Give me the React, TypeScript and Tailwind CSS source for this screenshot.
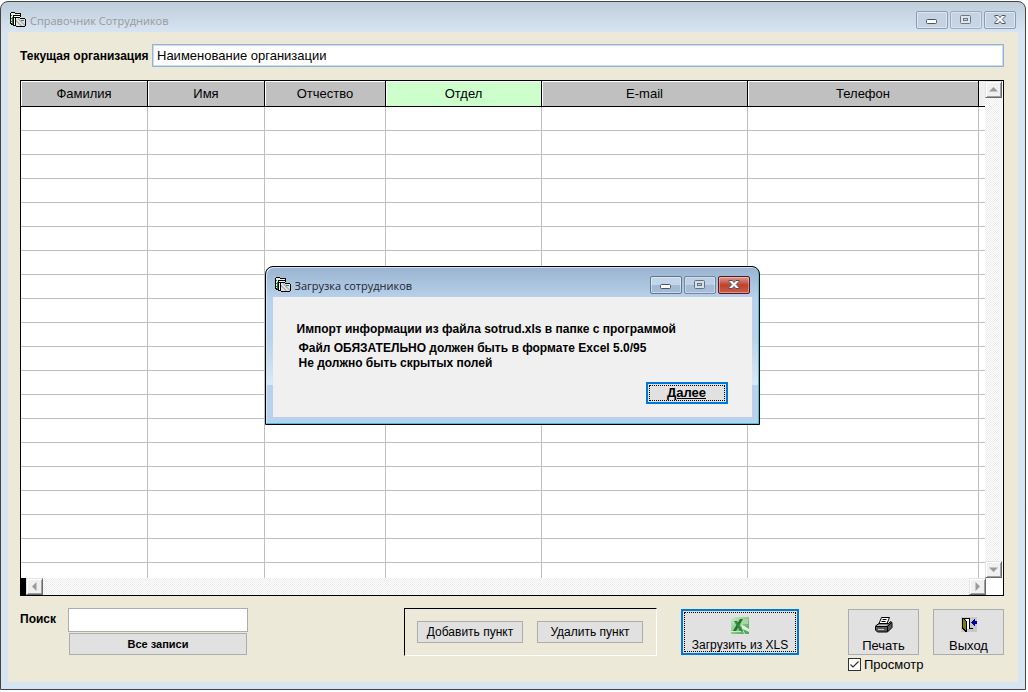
import clsx from "clsx";
import type { ReactNode } from "react";

const columns = [
  { title: "Фамилия", width: "w-[127px]" },
  { title: "Имя", width: "w-[117px]" },
  { title: "Отчество", width: "w-[121px]" },
  { title: "Отдел", width: "w-[156px]", sorted: true },
  { title: "E-mail", width: "w-[206px]" },
  { title: "Телефон", width: "w-[231px]" },
];

const rows = Array.from({ length: 20 }, (_, i) => i);

function AppIcon() {
  return (
    <svg width="16" height="16" viewBox="0 0 16 16" shapeRendering="crispEdges" aria-hidden="true">
      <path d="M1 0h4v1h6v3H4v9H1V12H0V1h1z" fill="#000" />
      <path d="M1 1h4v1h5v1H3v8H1z" fill="#e8f0e8" />
      <path d="M1 3h1v1H1zM1 6h1v1H1zM1 9h1v1H1z" fill="#0a8a2a" />
      <path d="M3 3h8v2H5v9H3z" fill="#000" />
      <path d="M4 4h6v1H4zM4 6h1v7H4z" fill="#fff" />
      <path d="M2 5h1v7H2z" fill="#0a8a2a" />
      <path d="M5 5h5v1h5v1h1v7h-1v1H6v-1H5z" fill="#000" />
      <path d="M6 6h4v1h5v7H6z" fill="#e4e4e4" />
      <path
        d="M6 8h1v1h1v1h1v1h1v1h1v1h1v1h-2v-1H9v-1H8v-1H7v-1H6zM8 6h1v1h1v1h1v1h1v1h1v1h1v1h1v2h-1v-1h-1v-1h-1v-1h-1v-1h-1V9H9V8H8z"
        fill="#b4b4b4"
      />
      <path d="M11 8h3v1h-3z" fill="#00a030" />
    </svg>
  );
}

function MinimizeGlyph() {
  return (
    <svg width="12" height="6" viewBox="0 0 12 6" aria-hidden="true">
      <rect x="0.5" y="0.5" width="10" height="4" rx="1" fill="#fff" stroke="#4c5566" />
    </svg>
  );
}

function MaximizeGlyph() {
  return (
    <svg width="12" height="10" viewBox="0 0 12 10" aria-hidden="true">
      <rect x="0.5" y="0.5" width="10" height="8" rx="1" fill="#e6e8ea" stroke="#4c5566" />
      <rect x="3.5" y="3.5" width="4" height="2" fill="#c4d2e2" stroke="#4c5566" />
    </svg>
  );
}

function CloseGlyph() {
  return (
    <svg width="12" height="10" viewBox="0 0 12 10" aria-hidden="true">
      <path
        d="M.8.5h3.4L6 2.6 7.8.5h3.4v.8L8.2 4.5l3 3.2v.8H7.8L6 6.4 4.2 8.5H.8v-.8l3-3.2-3-3.2z"
        fill="#fff"
        stroke="#4c5566"
      />
    </svg>
  );
}

function TitleBar({ title, active }: { title: string; active?: boolean }) {
  const button = clsx(
    "flex h-[18px] w-8 items-center justify-center rounded-xs border shadow-[inset_0_0_0_1px_rgba(255,255,255,0.45)]",
    active
      ? "border-[#61748c] bg-linear-to-b from-[#c3d5e9] from-50% to-[#a3bad4] to-50%"
      : "border-[#8c9db3] bg-[#c4d2e2]"
  );

  return (
    <header className="flex h-[30px] shrink-0 items-center gap-1 pt-1.5 pr-[9px] pl-[9px]">
      <AppIcon />
      <h1
        className={clsx(
          "flex-1 pt-px font-['Open_Sans',sans-serif] text-[11px] leading-4",
          active ? "text-[#1c2530]" : "text-[#999]"
        )}
      >
        {title}
      </h1>
      <div className="flex gap-0.5">
        <button type="button" aria-label="Свернуть" className={clsx(button, "pt-1")}>
          <MinimizeGlyph />
        </button>
        <button type="button" aria-label="Развернуть" className={clsx(button, "opacity-75")}>
          <MaximizeGlyph />
        </button>
        {active ? (
          <button
            type="button"
            aria-label="Закрыть"
            className="flex h-[18px] w-8 items-center justify-center rounded-xs border border-[#4f1a22] bg-linear-to-b from-[#dc9a8e] via-[#c0402c] via-50% to-[#cc5c48] shadow-[inset_0_0_0_1px_rgba(255,255,255,0.35)]"
          >
            <CloseGlyph />
          </button>
        ) : (
          <button type="button" aria-label="Закрыть" className={button}>
            <CloseGlyph />
          </button>
        )}
      </div>
    </header>
  );
}

function ScrollButton({ label, path }: { label: string; path: string }) {
  return (
    <button
      type="button"
      aria-label={label}
      className="flex size-[17px] shrink-0 items-center justify-center border border-t-[#e3e3e3] border-r-[#696969] border-b-[#696969] border-l-[#e3e3e3] bg-[#f0f0f0] shadow-[inset_1px_1px_0_#fff,inset_-1px_-1px_0_#a0a0a0]"
    >
      <svg width="9" height="9" viewBox="0 0 9 9" aria-hidden="true">
        <path d={path} fill="#9a9a9a" />
      </svg>
    </button>
  );
}

const track =
  "flex-1 bg-[repeating-conic-gradient(#ececec_0_25%,#ffffff_0_50%)] bg-size-[2px_2px]";

function StaffGrid() {
  return (
    <div className="flex min-h-0 flex-1 flex-col border border-black bg-white">
      <div className="flex min-h-0 flex-1">
        <div className="flex-1 overflow-hidden">
          <table className="w-full table-fixed border-separate border-spacing-0 text-[13px]">
            <thead>
              <tr className="h-[26px]">
                {columns.map((column) => (
                  <th
                    key={column.title}
                    className={clsx(
                      "border-r border-b border-black p-0 font-normal shadow-[inset_1px_1px_0_#fff]",
                      column.width,
                      column.sorted ? "bg-[#ccffcc]" : "bg-[#c0c0c0]"
                    )}
                  >
                    {column.title}
                  </th>
                ))}
                <td className="border-b border-black bg-[#f0f0f0] p-0" />
              </tr>
            </thead>
            <tbody>
              {rows.map((row) => (
                <tr key={row} className="h-6">
                  {columns.map((column) => (
                    <td key={column.title} className="border-r border-b border-[#c0c0c0] p-0" />
                  ))}
                  <td className="border-b border-[#c0c0c0] p-0" />
                </tr>
              ))}
            </tbody>
          </table>
        </div>
        <div className="mr-px flex w-[17px] flex-col">
          <ScrollButton label="Вверх" path="M0 6.5h9L4.5 2z" />
          <div className={track} />
          <ScrollButton label="Вниз" path="M0 2.5h9L4.5 7z" />
        </div>
      </div>
      <div className="flex h-[17px] shrink-0">
        <div className="w-[5px] bg-black" />
        <ScrollButton label="Влево" path="M6.5 0v9L2 4.5z" />
        <div className={track} />
        <ScrollButton label="Вправо" path="M2.5 0v9L7 4.5z" />
        <div className="w-[17px]" />
      </div>
    </div>
  );
}

function ExcelIcon() {
  return (
    <svg width="18" height="18" viewBox="0 0 18 18" className="shrink-0" aria-hidden="true">
      <defs>
        <linearGradient id="sheet" x1="0" y1="0" x2="1" y2="1">
          <stop offset="0" stopColor="#d4ecd0" />
          <stop offset="0.5" stopColor="#8cc88c" />
          <stop offset="1" stopColor="#3c9c50" />
        </linearGradient>
      </defs>
      <path d="M2 0h16v17H0V2z" fill="url(#sheet)" />
      <path d="M10 2h7v5h-8z" fill="#a8d8a0" />
      <path d="M10 7l8 5v5h-5z" fill="#f4faf2" opacity="0.85" />
      <path d="M12 12l6 3v2h-4z" fill="#4cae5c" />
      <path d="M2 14L9 2h3L5 14z" fill="#1e7430" />
      <path d="M3 4h3l6 10H9z" fill="#2c8c3c" />
      <path d="M0 14h10v1H0z" fill="#fff" opacity="0.6" />
    </svg>
  );
}

function PrinterIcon() {
  return (
    <svg width="18" height="16" viewBox="0 0 18 16" aria-hidden="true">
      <path d="M6.5.5h8l-2.500 6h-8z" fill="#fff" stroke="#000" />
      <path d="M7.500 2.500h4M6.500 4.500h4" stroke="#000" />
      <path d="M.5 9L4 6.500h9.500l2-2 1.500 1v5l-4.500 4.500H2.500L.5 13z" fill="#585858" stroke="#000" />
      <path d="M1.500 9L4 7.500h9l-1.500 1.500z" fill="#c4c4c4" />
      <path d="M1 9.500h11.500l4-4" stroke="#000" fill="none" />
      <path d="M3 12.500h6" stroke="#c8c8c8" />
      <path d="M12.500 9.500v5" stroke="#000" />
    </svg>
  );
}

function ExitIcon() {
  return (
    <svg width="16" height="16" viewBox="0 0 16 16" shapeRendering="crispEdges" aria-hidden="true">
      <path d="M0 0h16v15H0z" fill="#c8c8c8" />
      <path d="M1 1h8v1H1zM8 1h1v11H8zM8 11h4v1H8z" fill="#000" />
      <path d="M5 2h3v10H5z" fill="#fff" />
      <path d="M1 1h1l4 3v11H5l-4-3z" fill="#000" />
      <path d="M2 2l3 3v9l-3-3z" fill="#808000" />
      <path d="M10 5h1V4h1V3h1V2h1v2h2v3h-2v2h-1V8h-1V7h-1V6h-1z" fill="#0000a0" />
    </svg>
  );
}

const plainButton = "border border-[#adadad] bg-[#e1e1e1]";

function ToolButton({ icon, label }: { icon: ReactNode; label: string }) {
  return (
    <button
      type="button"
      className={clsx(plainButton, "flex h-[46px] w-[71px] flex-col items-center justify-end gap-[5px]")}
    >
      {icon}
      <span className="text-[13px] leading-4">{label}</span>
    </button>
  );
}

function Footer() {
  return (
    <footer className="flex items-start pt-3">
      <div className="flex w-[228px] items-start">
        <label htmlFor="search" className="w-12 pt-[3px] text-xs leading-4 font-bold">
          Поиск
        </label>
        <div className="flex flex-1 flex-col gap-px">
          <input id="search" type="text" className="h-6 w-full border border-[#adadad] bg-white px-1 text-xs" />
          <button type="button" className={clsx(plainButton, "mx-px h-[22px] text-[11px] font-bold")}>
            Все записи
          </button>
        </div>
      </div>

      <div className="ml-[156px] flex gap-3.5 border border-t-black border-r-white border-b-white border-l-black py-3 pr-[13px] pl-3">
        <button type="button" className={clsx(plainButton, "h-[22px] w-[106px] text-xs")}>
          Добавить пункт
        </button>
        <button type="button" className={clsx(plainButton, "h-[22px] w-[106px] text-xs")}>
          Удалить пункт
        </button>
      </div>

      <button
        type="button"
        className="mt-px ml-6 h-[46px] w-[118px] border-2 border-[#0078d7] bg-[#e1e1e1] p-px"
      >
        <span className="flex h-full flex-col items-center justify-end border border-dotted border-black text-xs leading-3">
          <ExcelIcon />
          <span className="pt-1">Загрузить из XLS</span>
        </span>
      </button>

      <div className="ml-auto flex flex-col gap-[3px] pt-px">
        <div className="flex gap-3.5">
          <ToolButton icon={<PrinterIcon />} label="Печать" />
          <ToolButton icon={<ExitIcon />} label="Выход" />
        </div>
        <label className="flex h-[13px] items-center gap-[3px] text-[13px] leading-4">
          <span className="grid size-[13px] place-items-center">
            <input
              type="checkbox"
              defaultChecked
              className="peer col-start-1 row-start-1 size-[13px] appearance-none border border-[#333] bg-white"
            />
            <svg
              width="11"
              height="11"
              viewBox="0 0 11 11"
              className="pointer-events-none invisible col-start-1 row-start-1 peer-checked:visible"
              aria-hidden="true"
            >
              <path d="M1.5 5.5L4 8l5.500-5.500" fill="none" stroke="#333" strokeWidth="1.2" />
            </svg>
          </span>
          Просмотр
        </label>
      </div>
    </footer>
  );
}

function ImportDialog() {
  return (
    <div
      role="dialog"
      aria-label="Загрузка сотрудников"
      className="w-[495px] rounded-t-lg border border-black bg-[linear-gradient(to_bottom,#99b4d1,#b9d1ea_20%,#b9d1ea_45%,#dbe8f6_75%,#b9d1ea_75%)] shadow-[inset_-1px_-1px_0_#3cc3e0,inset_1px_1px_0_#d4e4f4]"
    >
      <TitleBar title="Загрузка сотрудников" active />
      <div className="mx-[7px] mb-[7px] flex h-[120px] flex-col bg-[#f0f0f0] px-6 pt-[25px] pb-[13px] text-xs leading-[15px] font-bold">
        <p>Импорт информации из файла sotrud.xls в папке с программой</p>
        <p className="pt-1 pl-0.5">
          Файл ОБЯЗАТЕЛЬНО должен быть в формате Excel 5.0/95
          <br />
          Не должно быть скрытых полей
        </p>
        <button
          type="button"
          className="mt-auto h-[22px] w-[82px] self-end border-2 border-[#0078d7] bg-[#e1e1e1] p-px text-[13px] leading-4 font-bold underline"
        >
          <span className="block h-full border border-dotted border-black leading-[14px]">Далее</span>
        </button>
      </div>
    </div>
  );
}

export default function App() {
  return (
    <div className="h-screen bg-white pt-px pr-0.5 pb-0.5 font-['Liberation_Sans',Arial,sans-serif] text-black">
      <div className="relative flex h-full flex-col rounded-t-lg border border-[#444] bg-linear-to-b from-[#bfcddb] to-[#d7e4f2] to-[30px]">
        <TitleBar title="Справочник Сотрудников" />
        <main className="mx-[7px] mb-[7px] flex min-h-0 flex-1 flex-col bg-[#ece9d8] pt-3 pr-3.5 pb-[11px] pl-3">
          <div className="mb-[13px] flex items-center">
            <label htmlFor="organization" className="w-[132px] text-xs font-bold">
              Текущая организация
            </label>
            <input
              id="organization"
              type="text"
              defaultValue="Наименование организации"
              className="h-[23px] flex-1 border border-[#9fb0cc] bg-white px-1 text-[13px] shadow-[inset_0_0_0_1px_#c4dcf4]"
            />
          </div>
          <StaffGrid />
          <Footer />
        </main>
        <div className="absolute inset-0 flex items-center justify-center pr-0.5">
          <ImportDialog />
        </div>
      </div>
    </div>
  );
}
